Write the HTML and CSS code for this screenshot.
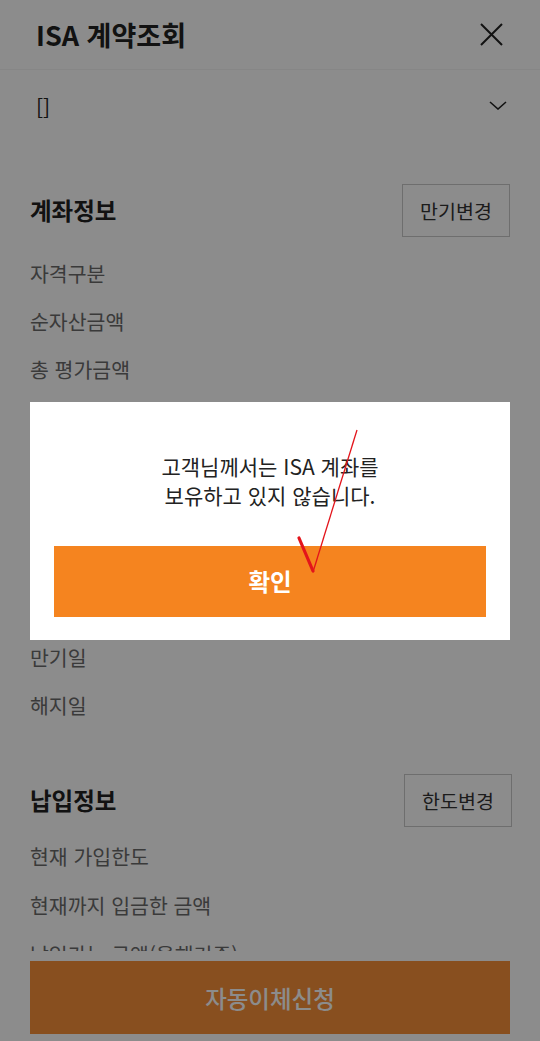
FILE: index.html
```html
<!DOCTYPE html>
<html lang="ko">
<head>
<meta charset="utf-8">
<title>ISA 계약조회</title>
<link rel="stylesheet" href="styles.css">
</head>
<body>
<div class="page">
  <header class="header">
    <h1 class="title">ISA 계약조회</h1>
    <button class="close" aria-label="닫기">
      <svg width="23" height="23" viewBox="0 0 23 23"><path d="M1 1 L22 22 M22 1 L1 22" stroke="#222" stroke-width="2" fill="none"/></svg>
    </button>
  </header>
  <div class="select">
    <span class="select-value">[]</span>
    <svg class="chevron" width="18" height="9" viewBox="0 0 18 9"><path d="M1 1 L9 8 L17 1" stroke="#222" stroke-width="1.6" fill="none"/></svg>
  </div>

  <section class="section section-account">
    <div class="section-head">
      <h2 class="section-title">계좌정보</h2>
      <button class="outline-btn">만기변경</button>
    </div>
    <ul class="items">
      <li>자격구분</li>
      <li>순자산금액</li>
      <li>총 평가금액</li>
      <li>평가손익</li>
      <li>수익률</li>
      <li>가입일</li>
      <li>계약기간</li>
      <li>개설지점</li>
      <li>만기일</li>
      <li>해지일</li>
    </ul>
  </section>

  <section class="section section-pay">
    <div class="section-head">
      <h2 class="section-title">납입정보</h2>
      <button class="outline-btn">한도변경</button>
    </div>
    <ul class="items">
      <li>현재 가입한도</li>
      <li>현재까지 입금한 금액</li>
      <li>납입가능 금액(올해기준)</li>
    </ul>
  </section>
</div>

<div class="bottom-bar">
  <button class="primary-btn">자동이체신청</button>
</div>

<div class="dim"></div>

<div class="modal-wrap">
  <div class="modal">
    <p class="modal-text">고객님께서는 ISA 계좌를<br>보유하고 있지 않습니다.</p>
    <button class="modal-btn">확인</button>
  </div>
</div>

<svg class="annotation" width="540" height="1041" viewBox="0 0 540 1041">
  <path d="M357 430 L313 572" stroke="#e3141b" stroke-width="1.3" fill="none"/>
  <path d="M299 538 L313 571" stroke="#e3141b" stroke-width="3.2" stroke-linecap="round" fill="none"/>
</svg>
</body>
</html>
```
FILE: styles.css
```css
* { box-sizing: border-box; }

html, body {
  margin: 0;
  padding: 0;
  background: #fff;
}

body {
  font-family: "Noto Sans CJK KR", "Noto Sans", sans-serif;
  color: #222;
  width: 540px;
  height: 1041px;
  overflow: hidden;
}

button {
  font-family: inherit;
  appearance: none;
  -webkit-appearance: none;
  margin: 0;
  padding: 0;
  cursor: pointer;
}

.header {
  height: 70px;
  display: flex;
  align-items: center;
  justify-content: space-between;
  padding: 0 37px 0 36px;
  border-bottom: 1px solid #f4f4f4;
}

.title {
  margin: 0;
  font-size: 27px;
  font-weight: 700;
  line-height: 1;
  color: #222;
}

.close {
  width: 23px;
  height: 23px;
  border: 0;
  background: none;
  display: block;
}

.close svg { display: block; }

.select {
  height: 74px;
  display: flex;
  align-items: center;
  justify-content: space-between;
  padding: 0 33px 0 36px;
}

.select-value {
  font-size: 21px;
  line-height: 1;
  color: #222;
}

.chevron { display: block; margin-top: -4px; }

.section-account { margin-top: 40px; }
.section-pay { margin-top: 44px; }

.section-head {
  display: flex;
  align-items: center;
  justify-content: space-between;
  padding: 0 30px;
}

.section-title {
  margin: 0;
  font-size: 23.5px;
  font-weight: 700;
  line-height: 1;
  color: #222;
}

.outline-btn {
  width: 108px;
  height: 53px;
  border: 1px solid #c8c8c8;
  background: #fff;
  color: #333;
  font-size: 19.5px;
}

.section-pay .outline-btn { margin-right: -2px; }

.items {
  list-style: none;
  margin: 13px 0 0;
  padding: 0 30px;
}

.items li {
  height: 48px;
  line-height: 46px;
  font-size: 20.5px;
  color: #6b6b6b;
  white-space: nowrap;
}

.section-pay .items { margin-top: 6px; }
.section-pay .items li { height: 49px; line-height: 47px; }

.bottom-bar {
  position: fixed;
  left: 0;
  right: 0;
  bottom: 0;
  height: 90px;
  padding: 10px 30px 7px;
  background: #fff;
  z-index: 10;
}

.primary-btn {
  width: 100%;
  height: 73px;
  border: 0;
  background: #f8903a;
  color: #fff;
  font-size: 23.5px;
  font-weight: 500;
}

.dim {
  position: fixed;
  inset: 0;
  background: rgba(0, 0, 0, 0.45);
  z-index: 20;
}

.modal-wrap {
  position: fixed;
  inset: 0;
  display: flex;
  align-items: center;
  justify-content: center;
  padding: 0 30px;
  z-index: 30;
}

.modal {
  width: 100%;
  background: #fff;
  padding: 50px 24px 23px;
}

.modal-text {
  margin: 0;
  font-size: 21px;
  line-height: 29px;
  text-align: center;
  color: #222;
}

.modal-btn {
  display: block;
  margin-top: 36px;
  width: 100%;
  height: 71px;
  border: 0;
  background: #f5841f;
  color: #fff;
  font-size: 23.5px;
  font-weight: 700;
}

.annotation {
  position: fixed;
  left: 0;
  top: 0;
  z-index: 40;
  pointer-events: none;
}
```
